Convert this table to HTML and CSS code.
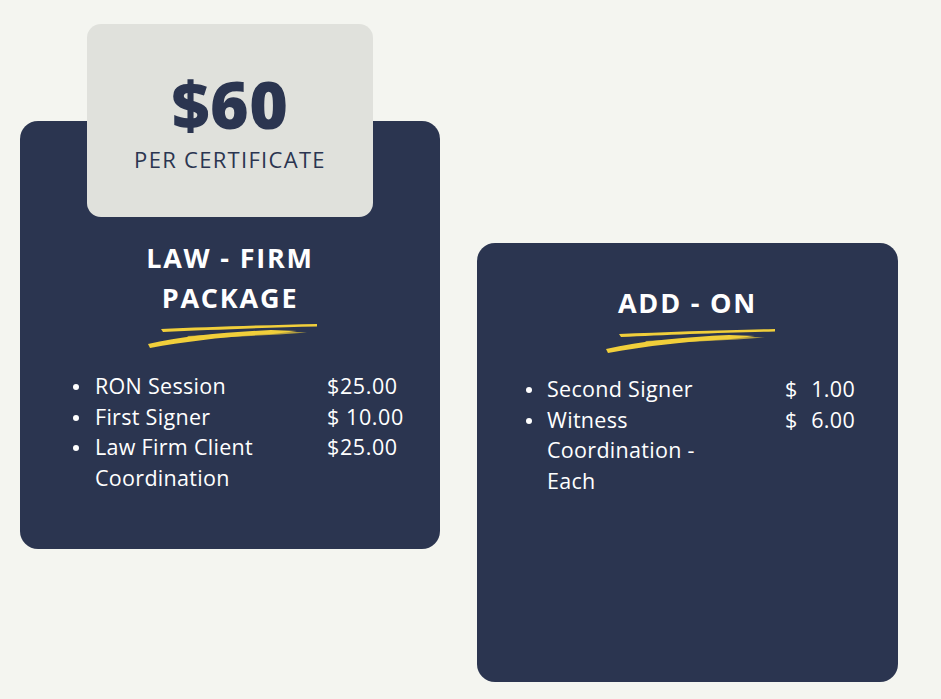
FILE: index.html
```html
<!DOCTYPE html>
<html>
<head>
<meta charset="utf-8">
<link rel="stylesheet" href="styles.css">
</head>
<body>
<div class="page">
  <section class="card card-law">
    <div class="price-box">
      <div class="price">$60</div>
      <div class="per">PER CERTIFICATE</div>
    </div>
    <h2 class="title">LAW - FIRM<br>PACKAGE</h2>
    <svg class="stroke" width="172" height="28" viewBox="0 0 172 28">
      <path d="M14 8 C60 6 120 4 170 3 L170 5.5 C120 6.5 60 9 16 11 Z" fill="#f1cf3b"/>
      <path d="M1 23 C35 15 80 11 124 9 L150 10 L126 13 C85 15 40 20 3 27 Z" fill="#f1cf3b"/>
      <path d="M40 15 L135 10.5 L160 11.5 L132 13.5 L44 18 Z" fill="#f1cf3b" opacity="0.7"/>
    </svg>
    <ul class="items items-law">
      <li><span class="name">RON Session</span><span class="amt">$25.00</span></li>
      <li><span class="name">First Signer</span><span class="amt">$ 10.00</span></li>
      <li><span class="name">Law Firm Client Coordination</span><span class="amt">$25.00</span></li>
    </ul>
  </section>
  <section class="card card-add">
    <h2 class="title">ADD - ON</h2>
    <svg class="stroke" width="172" height="28" viewBox="0 0 172 28">
      <path d="M14 8 C60 6 120 4 170 3 L170 5.5 C120 6.5 60 9 16 11 Z" fill="#f1cf3b"/>
      <path d="M1 23 C35 15 80 11 124 9 L150 10 L126 13 C85 15 40 20 3 27 Z" fill="#f1cf3b"/>
      <path d="M40 15 L135 10.5 L160 11.5 L132 13.5 L44 18 Z" fill="#f1cf3b" opacity="0.7"/>
    </svg>
    <ul class="items items-add">
      <li><span class="name">Second Signer</span><span class="amt split"><span>$</span><span>1.00</span></span></li>
      <li><span class="name">Witness Coordination - Each</span><span class="amt split"><span>$</span><span>6.00</span></span></li>
    </ul>
  </section>
</div>
</body>
</html>
```

FILE: styles.css
```css
* { box-sizing: border-box; }
html, body { margin: 0; padding: 0; }
body {
  background: #f4f5f0;
  font-family: "Open Sans", "DejaVu Sans", sans-serif;
  width: 941px;
  height: 699px;
  overflow: hidden;
}
.page {
  display: flex;
  align-items: flex-start;
  padding-left: 20px;
  gap: 37px;
}
.card {
  background: #2b3550;
  border-radius: 18px;
  color: #ffffff;
  display: flex;
  flex-direction: column;
  align-items: center;
}
.card-law {
  width: 420px;
  height: 428px;
  margin-top: 121px;
}
.card-add {
  width: 421px;
  height: 439px;
  margin-top: 243px;
}
.price-box {
  width: 286px;
  height: 193px;
  margin-top: -97px;
  background: #e0e1dc;
  border-radius: 14px;
  color: #2b3550;
  display: flex;
  flex-direction: column;
  align-items: center;
  padding-top: 44px;
}
.price {
  font-weight: 800;
  font-size: 66px;
  line-height: 70px;
  letter-spacing: 0.5px;
}
.per {
  font-size: 22px;
  line-height: 30px;
  margin-top: 6px;
  letter-spacing: 1.3px;
}
.title {
  margin: 21px 0 0;
  font-size: 27px;
  line-height: 40px;
  font-weight: 700;
  text-align: center;
  letter-spacing: 1.8px;
}
.card-add .title {
  margin-top: 40px;
}
.stroke {
  display: block;
  margin-top: 3px;
  margin-left: 6px;
}
.items {
  list-style: none;
  margin: 22px 0 0;
  padding: 0;
  align-self: flex-start;
  font-size: 21.5px;
  line-height: 30.5px;
  letter-spacing: 0.3px;
}
.items li {
  display: flex;
}
.items li::before {
  content: "";
  flex: none;
  width: 6px;
  height: 6px;
  border-radius: 50%;
  background: #ffffff;
  margin-top: 13px;
  margin-right: 16px;
}
.items-law { margin-left: 53px; }
.items-law .name { width: 232px; }
.items-law .amt { letter-spacing: 0.6px; }
.items-add { margin-left: 49px; margin-top: 20px; }
.items-add li::before { margin-right: 15px; }
.items-add .name { width: 172px; }
.items-add .amt { margin-left: 66px; width: 70px; }
.split { display: flex; justify-content: space-between; }
```
